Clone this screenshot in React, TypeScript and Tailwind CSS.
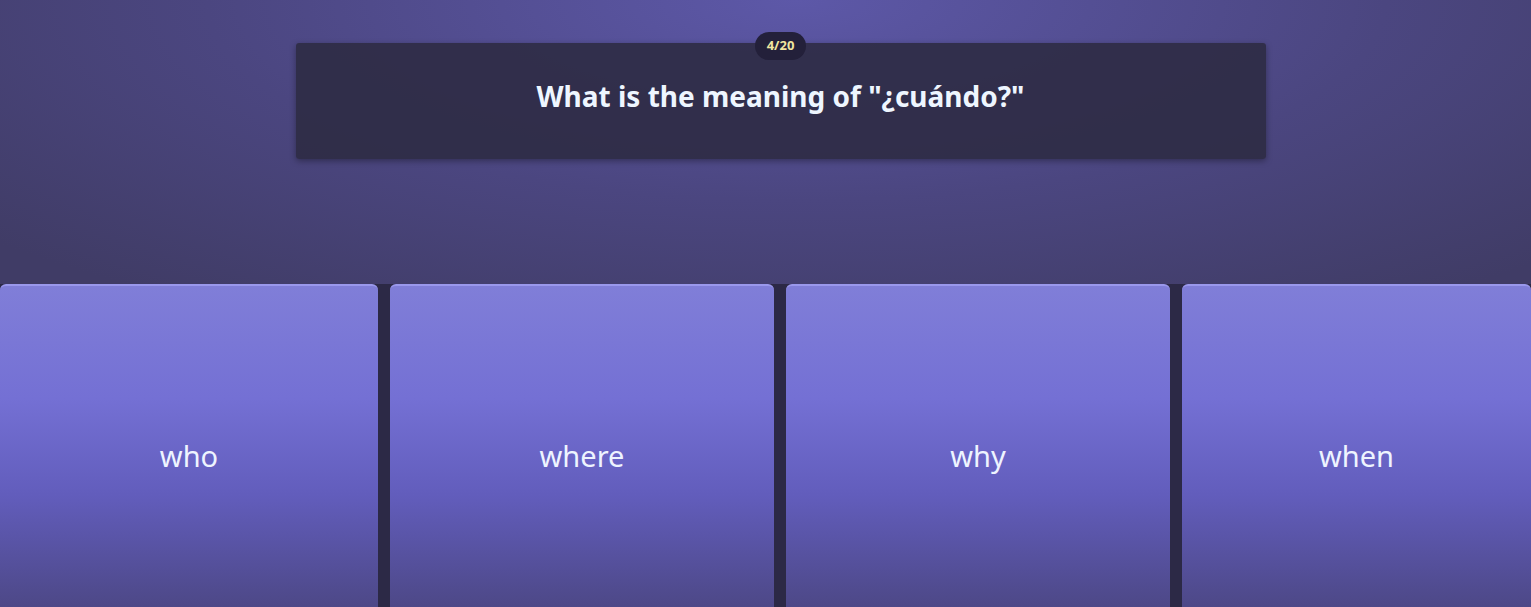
const answers = ["who", "where", "why", "when"];

export default function App() {
  return (
    <div className="w-[1531px] h-[607px] overflow-hidden flex flex-col bg-[radial-gradient(ellipse_70%_60%_at_52%_0%,#5d58a8_0%,#4b4680_55%,#403c66_100%)] font-['Noto_Sans',sans-serif]">
      {/* Question */}
      <div className="flex flex-col items-center pt-[32px] pl-[30px]">
        <div className="relative z-10 -mb-[17px] h-[28px] px-[12px] rounded-full bg-[#23203a] flex items-center text-[13px] font-bold text-[#f1e6a0]">
          4/20
        </div>
        <div className="w-[970px] h-[116px] rounded-[3px] bg-[#2e2b44]/90 shadow-[0_2px_6px_rgba(0,0,0,0.35)] flex items-center justify-center pb-[10px]">
          <span className="text-[28px] font-bold text-[#eef6ff]">
            What is the meaning of "¿cuándo?"
          </span>
        </div>
      </div>

      {/* Answers */}
      <div className="mt-[125px] flex-1 grid grid-cols-[378px_384px_384px_1fr] gap-[12px] bg-[#2c2946]">
        {answers.map((a) => (
          <div
            key={a}
            className="rounded-t-[6px] border-t-2 border-[#9a98ec] bg-[linear-gradient(180deg,#807ed8_0%,#7470d4_35%,#625dbc_65%,#4d4887_100%)] flex justify-center pt-[155px]"
          >
            <span className="text-[29px] text-[#eef4ff] leading-none">{a}</span>
          </div>
        ))}
      </div>
    </div>
  );
}
